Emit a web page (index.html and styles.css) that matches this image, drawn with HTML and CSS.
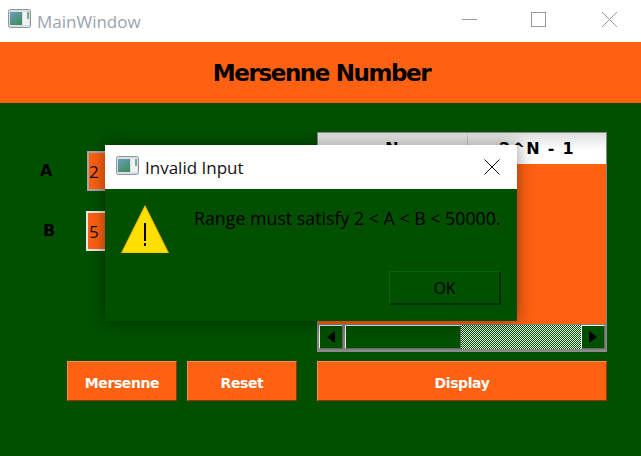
FILE: index.html
```html
<!DOCTYPE html>
<html lang="en">
<head>
<meta charset="utf-8">
<title>MainWindow</title>
<link rel="stylesheet" href="styles.css">
</head>
<body>
<div class="window">
  <div class="titlebar">
    <svg class="app-icon" width="23" height="19" viewBox="0 0 23 19"><defs><linearGradient id="ig" x1="0" y1="0" x2=".6" y2="1"><stop offset="0" stop-color="#6f9cc0"/><stop offset="1" stop-color="#3f9060"/></linearGradient></defs><rect x=".5" y=".5" width="22" height="18" rx="2" fill="#dcdfe2" stroke="#8c96a3"/><rect x="2" y="3" width="12" height="13" fill="url(#ig)"/><rect x="15" y="3" width="6" height="13" fill="#f2f2f2"/><rect x="19" y="3" width="2" height="7" fill="#6fae93"/></svg>
    <span class="window-title">MainWindow</span>
    <div class="caption-buttons">
      <svg width="15" height="15" viewBox="0 0 15 15"><path d="M0 7.5h15" stroke="#999" fill="none"/></svg>
      <svg class="cap-max" width="15" height="15" viewBox="0 0 15 15"><rect x=".5" y=".5" width="14" height="14" stroke="#999" fill="none"/></svg>
      <svg width="15" height="15" viewBox="0 0 15 15"><path d="M0 0l15 15M15 0L0 15" stroke="#999" fill="none"/></svg>
    </div>
  </div>
  <header class="banner">Mersenne Number</header>
  <main class="main">
    <section class="form">
      <div class="field field-a"><label class="field-label">A</label><div class="input">2</div></div>
      <div class="field field-b"><label class="field-label">B</label><div class="input">5</div></div>
    </section>
    <section class="grid-view">
      <div class="grid-head">
        <div class="col-head col-n">N</div>
        <div class="col-head col-m">2^N - 1</div>
      </div>
      <div class="grid-body"></div>
      <div class="scrollbar">
        <div class="sb-btn"><svg width="8" height="12" viewBox="0 0 8 12"><path d="M8 0v12L0 6z"/></svg></div>
        <div class="sb-thumb"></div>
        <svg class="sb-track" width="122" height="24" shape-rendering="crispEdges"><defs><pattern id="chk" width="2" height="2" patternUnits="userSpaceOnUse"><rect width="2" height="2" fill="#005000"/><rect width="1" height="1" fill="#e6f6e6"/><rect x="1" y="1" width="1" height="1" fill="#e6f6e6"/></pattern></defs><rect width="122" height="24" fill="url(#chk)"/></svg>
        <div class="sb-btn"><svg width="8" height="12" viewBox="0 0 8 12"><path d="M0 0v12l8-6z"/></svg></div>
      </div>
    </section>
    <div class="actions-left">
      <button class="btn btn-small">Mersenne</button>
      <button class="btn btn-small">Reset</button>
    </div>
    <button class="btn btn-wide">Display</button>
  </main>
  <div class="dialog">
    <div class="dialog-title">
      <svg class="app-icon dialog-icon" width="23" height="19" viewBox="0 0 23 19"><rect x=".5" y=".5" width="22" height="18" rx="2" fill="#dcdfe2" stroke="#8c96a3"/><rect x="2" y="3" width="12" height="13" fill="url(#ig)"/><rect x="15" y="3" width="6" height="13" fill="#f2f2f2"/><rect x="19" y="3" width="2" height="7" fill="#6fae93"/></svg>
      <span class="dialog-caption">Invalid Input</span>
      <svg class="dialog-close" width="16" height="16" viewBox="0 0 16 16"><path d="M.5.5l15 15M15.500.5l-15 15" stroke="#111" fill="none"/></svg>
    </div>
    <div class="dialog-body">
      <svg class="warn" width="48" height="48" viewBox="0 0 48 48"><path d="M24 .8L47.500 48H.5z" fill="#ffe000" stroke="#f0b400"/><rect x="23" y="18" width="2" height="18" fill="#000"/><rect x="23" y="38" width="2" height="3" fill="#000"/></svg>
      <p class="message">Range must satisfy 2 &lt; A &lt; B &lt; 50000.</p>
    </div>
    <div class="dialog-foot"><button class="ok">OK</button></div>
  </div>
</div>
</body>
</html>
```
FILE: styles.css
```css
* { box-sizing: border-box; }
html, body { margin: 0; padding: 0; }
body { width: 641px; height: 456px; overflow: hidden; font-family: "Open Sans", "Noto Sans", sans-serif; }
.window { position: relative; width: 641px; height: 456px; background: #005000; overflow: hidden; }

.titlebar { height: 42px; background: #fff; display: flex; align-items: center; padding-left: 8px; }
.app-icon { flex: none; margin-bottom: 5px; }
.window-title { margin-left: 6px; font-size: 17px; color: #9aa3ae; }
.caption-buttons { margin-left: auto; display: flex; gap: 54px; padding-right: 24px; margin-bottom: 3px; }
.cap-max { margin-right: 2px; }

.banner { height: 61px; padding-left: 2px; background: #ff6112; color: #000; display: flex; align-items: center; justify-content: center; font: bold 23px "DejaVu Sans", Verdana, sans-serif; letter-spacing: -1.4px; }

.main { height: 353px; padding-top: 29px; display: grid; grid-template-columns: 317px 290px; grid-template-rows: 220px 40px; row-gap: 9px; }

.form { padding-top: 19px; display: flex; flex-direction: column; gap: 20px; }
.field { display: flex; align-items: center; height: 40px; }
.field-label { font: bold 16px "DejaVu Sans", sans-serif; color: #000; margin-bottom: 2px; }
.field-a { padding-left: 40px; }
.field-a .field-label { width: 47px; }
.field-b { padding-left: 43px; }
.field-b .field-label { width: 43px; }
.input { width: 60px; height: 40px; border: 2px solid #a8a8a8; background: #ff6112; color: #111; font-size: 17px; display: flex; align-items: center; padding-left: 1px; }
.field-a .input { padding-left: 0; }
.field-b .input { border-color: #e8e8e8; }

.grid-view { height: 220px; border: 1px solid #8a8a8a; border-bottom-width: 2px; display: flex; flex-direction: column; background: #ff6112; }
.grid-head { height: 31px; background: linear-gradient(#dedede, #fff 55%); display: flex; flex: none; }
.col-head { font: bold 16px "DejaVu Sans", sans-serif; letter-spacing: 1.3px; color: #000; display: flex; align-items: center; justify-content: center; }
.col-n { width: 150px; border-right: 1px solid #ccc; }
.col-m { flex: 1; }
.grid-body { flex: 1; }
.scrollbar { height: 26px; flex: none; background: #808080; padding: 1px; display: flex; gap: 2px; }
.sb-btn { width: 24px; background: #005000; border: 1px solid; border-color: #eee #666 #666 #eee; display: flex; align-items: center; justify-content: center; }
.sb-btn:last-child { margin-left: -2px; }
.sb-thumb { width: 116px; background: #005000; border: 1px solid; border-color: #eee #666 #666 #eee; }
.sb-track { flex: 1; margin: 0 -1px 0 -2px; }

.actions-left { padding-left: 67px; display: flex; gap: 10px; }
.btn { height: 40px; background: #ff6112; color: #fff; font: bold 14px "DejaVu Sans", sans-serif; letter-spacing: -.4px; border: 1px solid; border-color: #ff8b4c #963500 #963500 #ff8b4c; padding: 3px 0 0; }
.btn-small { width: 110px; }
.btn-wide { width: 290px; }

.dialog { position: absolute; left: 105px; top: 145px; width: 412px; height: 176px; background: #005000; box-shadow: 0 0 16px rgba(0, 0, 0, .45); display: flex; flex-direction: column; }
.dialog-title { height: 44px; background: #fff; flex: none; display: flex; align-items: center; padding: 0 17px 0 11px; }
.dialog-icon { margin-bottom: 3px; }
.dialog-caption { margin-left: 6px; font-size: 17px; color: #111; }
.dialog-close { margin-left: auto; }
.dialog-body { height: 82px; display: flex; padding: 16px 0 0 16px; }
.warn { flex: none; }
.message { margin: 1px 0 0 25px; font-size: 17.8px; color: #000; white-space: nowrap; }
.dialog-foot { display: flex; justify-content: flex-end; padding-right: 16px; }
.ok { width: 112px; height: 34px; background: #005000; border: 1px solid; border-color: #0a640a #003000 #003000 #0a640a; border-width: 1px 2px 2px 1px; color: #000; font: 16px "Open Sans", sans-serif; padding: 0; }
```
